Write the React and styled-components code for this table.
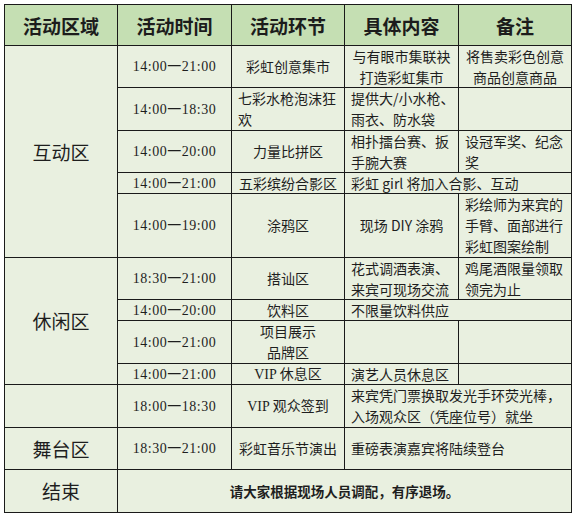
import styled, { createGlobalStyle } from 'styled-components';

const GlobalStyle = createGlobalStyle`
  html, body {
    margin: 0;
    padding: 0;
    background: #ffffff;
  }
  body {
    font-family: "Noto Sans CJK SC", "Noto Sans", sans-serif;
    color: #1e1e1e;
  }
`

const Page = styled.div`
  padding: 4px 0 0 4px;
`

const Grid = styled.div`
  display: grid;
  width: 568px;
  box-sizing: border-box;
  grid-template-columns: 113px 114px 113px 114px 113px;
  grid-template-rows: 41px 42px 43px 42px 21px 64px 42px 21px 43px 21px 43px 42px 43px;
  border-top: 1px solid #1a1a1a;
  border-left: 1px solid #1a1a1a;
  background: #e9f0e0;
`

const Cell = styled.div`
  box-sizing: border-box;
  border-right: 1px solid #1a1a1a;
  border-bottom: 1px solid #1a1a1a;
  grid-column: span ${({ $cols }) => $cols || 1};
  grid-row: span ${({ $rows }) => $rows || 1};
  display: flex;
  flex-direction: column;
  justify-content: center;
  align-items: ${({ $left }) => ($left ? 'flex-start' : 'center')};
  text-align: ${({ $left }) => ($left ? 'left' : 'center')};
  padding: 0 6px;
  font-size: 14px;
  line-height: 21px;
  white-space: nowrap;
  overflow: hidden;
`

const Head = styled(Cell)`
  background: #c5dfb3;
  font-size: 19px;
  font-weight: 700;
  color: #1c1c1c;
`

const Zone = styled(Cell)`
  font-size: 19px;
  line-height: 24px;
`

const Time = styled(Cell)`
  font-family: "Liberation Serif", "Noto Sans CJK SC", serif;
  font-size: 14px;
  letter-spacing: 0.5px;
`

const Closing = styled(Cell)`
  font-size: 13.5px;
  font-weight: 700;
`

const Latin = styled.span`
  font-family: "Liberation Serif", serif;
`

const Lines = ({ text }) =>
  text.split('\n').map((line, i) => <span key={i}>{line}</span>)

const headers = ['活动区域', '活动时间', '活动环节', '具体内容', '备注']

export default function App() {
  return (
    <>
      <GlobalStyle />
      <Page>
        <Grid>
          {headers.map((h) => (
            <Head key={h}>{h}</Head>
          ))}

          <Zone $rows={5}>互动区</Zone>
          <Time>14:00一21:00</Time>
          <Cell>彩虹创意集市</Cell>
          <Cell><Lines text={'与有眼市集联袂\n打造彩虹集市'} /></Cell>
          <Cell><Lines text={'将售卖彩色创意\n商品创意商品'} /></Cell>

          <Time>14:00一18:30</Time>
          <Cell $left><Lines text={'七彩水枪泡沫狂\n欢'} /></Cell>
          <Cell $left><Lines text={'提供大/小水枪、\n雨衣、防水袋'} /></Cell>
          <Cell />

          <Time>14:00一20:00</Time>
          <Cell>力量比拼区</Cell>
          <Cell $left><Lines text={'相扑擂台赛、扳\n手腕大赛'} /></Cell>
          <Cell $left><Lines text={'设冠军奖、纪念\n奖'} /></Cell>

          <Time>14:00一21:00</Time>
          <Cell>五彩缤纷合影区</Cell>
          <Cell $left $cols={2}>彩虹 girl 将加入合影、互动</Cell>

          <Time>14:00一19:00</Time>
          <Cell>涂鸦区</Cell>
          <Cell>现场 DIY 涂鸦</Cell>
          <Cell $left><Lines text={'彩绘师为来宾的\n手臂、面部进行\n彩虹图案绘制'} /></Cell>

          <Zone $rows={4}>休闲区</Zone>
          <Time>18:30一21:00</Time>
          <Cell>搭讪区</Cell>
          <Cell $left><Lines text={'花式调酒表演、\n来宾可现场交流'} /></Cell>
          <Cell $left><Lines text={'鸡尾酒限量领取\n领完为止'} /></Cell>

          <Time>14:00一20:00</Time>
          <Cell>饮料区</Cell>
          <Cell $left $cols={2}>不限量饮料供应</Cell>

          <Time>14:00一21:00</Time>
          <Cell><Lines text={'项目展示\n品牌区'} /></Cell>
          <Cell />
          <Cell />

          <Time>14:00一21:00</Time>
          <Cell><span><Latin>VIP</Latin> 休息区</span></Cell>
          <Cell $left>演艺人员休息区</Cell>
          <Cell />

          <Zone />
          <Time>18:00一18:30</Time>
          <Cell><span><Latin>VIP</Latin> 观众签到</span></Cell>
          <Cell $left $cols={2}>
            <Lines text={'来宾凭门票换取发光手环荧光棒，\n入场观众区（凭座位号）就坐'} />
          </Cell>

          <Zone>舞台区</Zone>
          <Time>18:30一21:00</Time>
          <Cell>彩虹音乐节演出</Cell>
          <Cell $left $cols={2}>重磅表演嘉宾将陆续登台</Cell>

          <Zone>结束</Zone>
          <Closing $cols={4}>请大家根据现场人员调配，有序退场。</Closing>
        </Grid>
      </Page>
    </>
  )
}
